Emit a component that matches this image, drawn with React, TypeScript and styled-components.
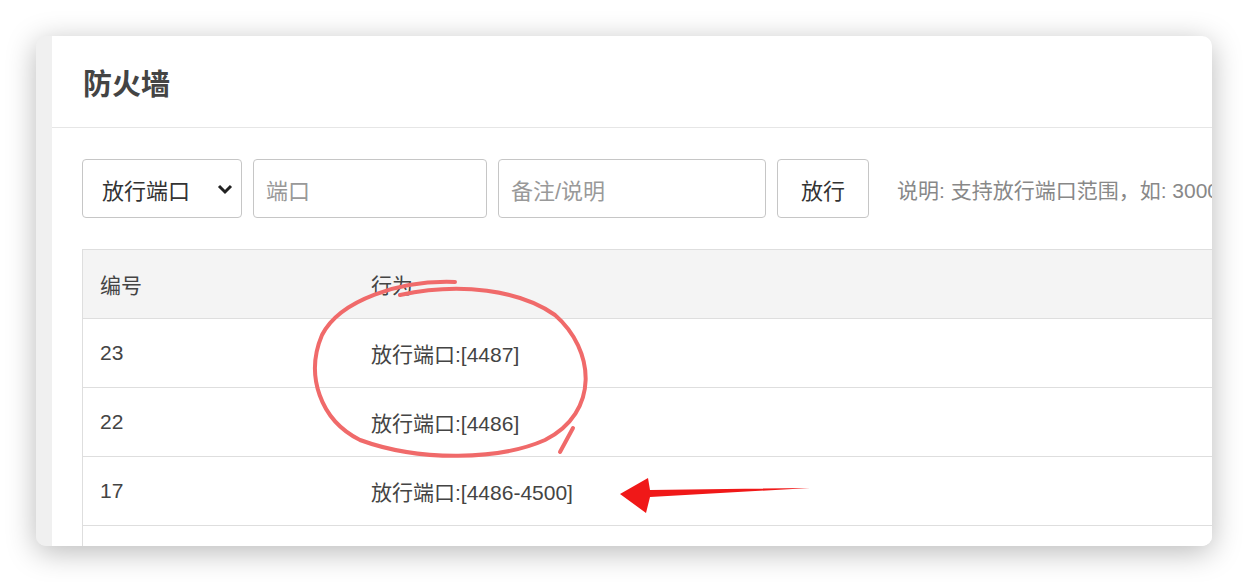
import React from "react";
import styled, { createGlobalStyle } from "styled-components";

const Global = createGlobalStyle`
  html, body { margin: 0; padding: 0; background: #fff; }
  body { font-family: "Liberation Sans", "Noto Sans CJK SC", sans-serif; }
`;

const Stage = styled.div`
  width: 1248px; height: 582px; padding: 36px; box-sizing: border-box;
  position: relative; background: #fff;
`;
const Win = styled.div`
  width: 1176px; height: 510px; border-radius: 10px; overflow: hidden;
  display: flex; background: #f0f0f0;
  box-shadow: 0 6px 30px rgba(0,0,0,0.28);
`;
const Strip = styled.div` width: 16px; flex: none; background: #f0f0f0; `;
const Main = styled.div` flex: 1; background: #fff; display: flex; flex-direction: column; min-width: 0; overflow: hidden; `;
const Header = styled.div`
  flex: none; height: 92px; box-sizing: border-box; border-bottom: 1.5px solid #e6e6e6;
  display: flex; align-items: center; padding-left: 31px;
  font-size: 29px; font-weight: bold; color: #444;
`;
const Body = styled.div` flex: none; padding: 31px 0 0 30px; `;
const Toolbar = styled.div` display: flex; align-items: center; gap: 11px; height: 59px; `;
const Box = styled.div<{ w: number }>`
  flex: none; width: ${p => p.w}px; height: 59px; box-sizing: border-box;
  border: 1.5px solid #c6c6c6; border-radius: 4px;
  display: flex; align-items: center; padding: 0 12px; font-size: 22px; color: #333;
`;
const Placeholder = styled.span` color: #999; `;
const Select = styled(Box)` padding: 0 8px 0 19px; justify-content: space-between; `;
const Btn = styled(Box)` justify-content: center; color: #333; `;
const Note = styled.div` flex: none; margin-left: 17px; font-size: 21px; color: #888; white-space: nowrap; `;
const Table = styled.div`
  margin-top: 31px; border-left: 1.5px solid #dedede; border-top: 1.5px solid #dedede;
`;
const Row = styled.div<{ head?: boolean }>`
  height: 68px; display: flex; align-items: center; border-bottom: 1.5px solid #dedede;
  background: ${p => (p.head ? "#f4f4f4" : "#fff")}; font-size: 21px; color: #444;
`;
const C1 = styled.div` width: 271px; padding-left: 17px; `;
const C2 = styled.div` flex: 1; `;
const Overlay = styled.svg` position: absolute; left: 0; top: 0; pointer-events: none; `;

export default function App() {
  return (
    <Stage>
      <Global />
      <Win>
        <Strip />
        <Main>
          <Header>防火墙</Header>
          <Body>
            <Toolbar>
              <Select w={160}>
                <span>放行端口</span>
                <svg width="16" height="12" viewBox="0 0 16 12"><path d="M2 3l6 6 6-6" stroke="#222" strokeWidth="3" fill="none" /></svg>
              </Select>
              <Box w={234}><Placeholder>端口</Placeholder></Box>
              <Box w={268}><Placeholder>备注/说明</Placeholder></Box>
              <Btn w={92}>放行</Btn>
              <Note>说明: 支持放行端口范围，如: 3000-4000</Note>
            </Toolbar>
            <Table>
              <Row head><C1>编号</C1><C2>行为</C2></Row>
              <Row><C1>23</C1><C2>放行端口:[4487]</C2></Row>
              <Row><C1>22</C1><C2>放行端口:[4486]</C2></Row>
              <Row><C1>17</C1><C2>放行端口:[4486-4500]</C2></Row>
              <Row />
            </Table>
          </Body>
        </Main>
      </Win>
      <Overlay width="1248" height="582">
        <path d="M455 282 C400 280 340 300 322 335 C305 375 320 420 360 440 C420 462 500 460 545 440 C600 412 595 350 555 315 C520 290 460 282 400 295"
          stroke="#f06a6a" strokeWidth="4" fill="none" strokeLinecap="round" />
        <path d="M560 452 L573 428" stroke="#f06a6a" strokeWidth="4" fill="none" strokeLinecap="round" />
        <path d="M810 488 L650 497 L646 513 L620 494 L648 478 L650 490 Z" fill="#f01818" />
      </Overlay>
    </Stage>
  );
}
